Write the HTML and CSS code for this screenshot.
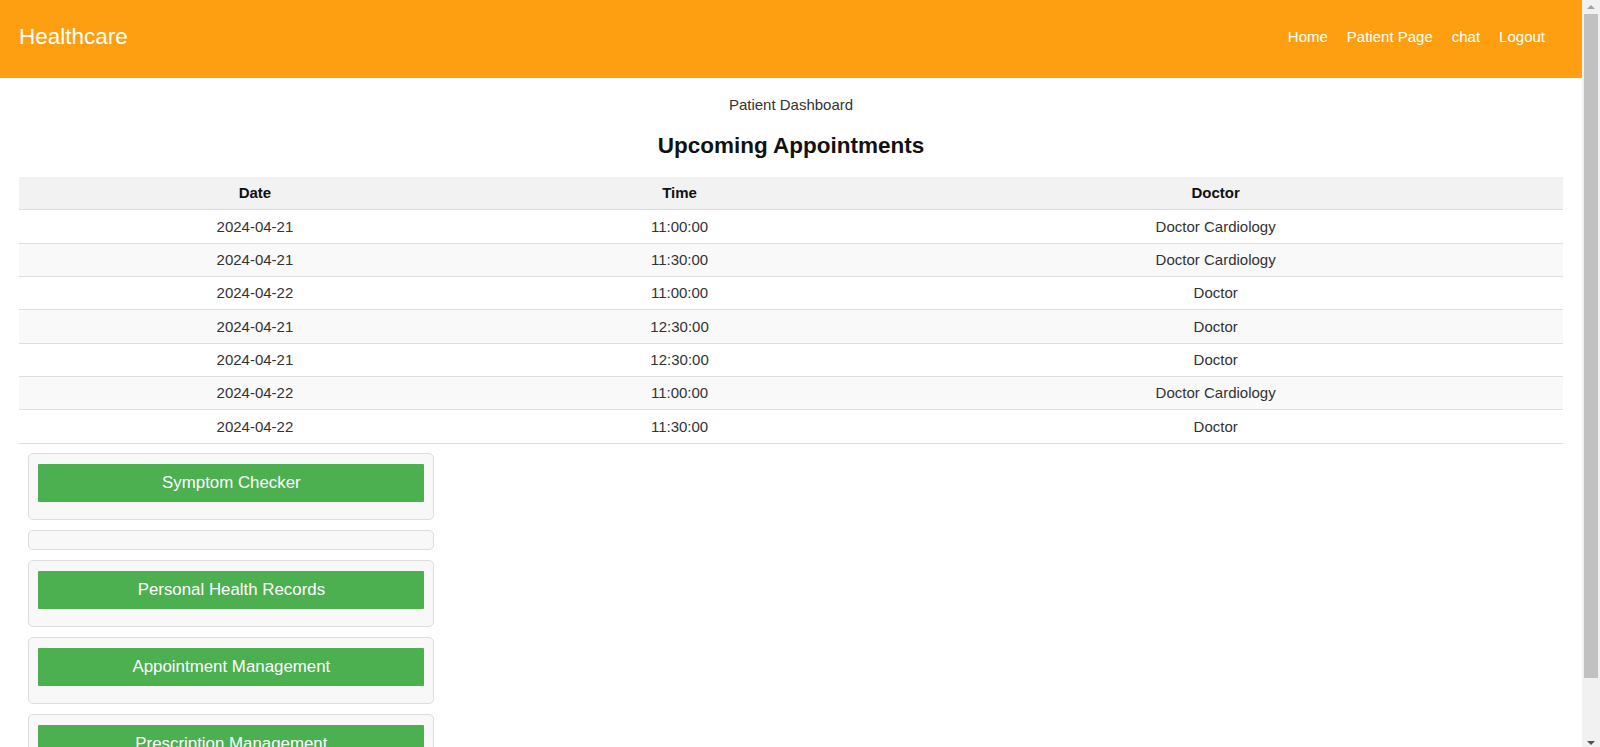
FILE: index.html
```html
<!DOCTYPE html>
<html lang="en">
<head>
<meta charset="utf-8">
<title>Healthcare - Patient Dashboard</title>
<link rel="stylesheet" href="styles.css">
</head>
<body>
<div class="viewport">
  <div class="page">
    <header class="topbar">
      <div class="brand">Healthcare</div>
      <nav class="nav">
        <a href="#" class="nav-link">Home</a>
        <a href="#" class="nav-link">Patient Page</a>
        <a href="#" class="nav-link">chat</a>
        <a href="#" class="nav-link">Logout</a>
      </nav>
    </header>
    <main class="content">
      <p class="subtitle">Patient Dashboard</p>
      <h2 class="section-title">Upcoming Appointments</h2>
      <table class="appt-table">
        <thead>
          <tr><th>Date</th><th>Time</th><th>Doctor</th></tr>
        </thead>
        <tbody>
          <tr><td>2024-04-21</td><td>11:00:00</td><td>Doctor Cardiology</td></tr>
          <tr><td>2024-04-21</td><td>11:30:00</td><td>Doctor Cardiology</td></tr>
          <tr><td>2024-04-22</td><td>11:00:00</td><td>Doctor</td></tr>
          <tr><td>2024-04-21</td><td>12:30:00</td><td>Doctor</td></tr>
          <tr><td>2024-04-21</td><td>12:30:00</td><td>Doctor</td></tr>
          <tr><td>2024-04-22</td><td>11:00:00</td><td>Doctor Cardiology</td></tr>
          <tr><td>2024-04-22</td><td>11:30:00</td><td>Doctor</td></tr>
        </tbody>
      </table>
      <div class="features">
        <div class="card"><button class="btn">Symptom Checker</button></div>
        <div class="card card-empty"></div>
        <div class="card"><button class="btn">Personal Health Records</button></div>
        <div class="card"><button class="btn">Appointment Management</button></div>
        <div class="card"><button class="btn">Prescription Management</button></div>
        <div class="card card-empty"></div>
      </div>
    </main>
  </div>
  <div class="scrollbar" aria-hidden="true">
    <div class="sb-button"><span class="sb-arrow-up"></span></div>
    <div class="sb-track"><div class="sb-thumb"></div></div>
    <div class="sb-button"><span class="sb-arrow-down"></span></div>
  </div>
</div>
</body>
</html>
```
FILE: styles.css
```css
html, body {
  margin: 0;
  padding: 0;
  height: 100%;
  overflow: hidden;
}

body {
  font-family: "Liberation Sans", Arial, sans-serif;
  font-size: 15px;
  color: #333;
  background: #fff;
}

.viewport {
  display: flex;
  height: 100vh;
}

.page {
  flex: 1;
  min-width: 0;
  overflow: hidden;
}

/* window scrollbar */
.scrollbar {
  width: 18px;
  flex: none;
  display: flex;
  flex-direction: column;
  background: #f1f1f1;
}

.sb-button {
  height: 14px;
  flex: none;
  display: flex;
  align-items: center;
  justify-content: center;
}

.sb-arrow-up {
  width: 0;
  height: 0;
  border-left: 4px solid transparent;
  border-right: 4px solid transparent;
  border-bottom: 4px solid #a3a3a3;
}

.sb-arrow-down {
  width: 0;
  height: 0;
  margin-top: 6px;
  border-left: 4px solid transparent;
  border-right: 4px solid transparent;
  border-top: 4px solid #505050;
}

.sb-track {
  flex: 1;
  padding: 0 2px;
}

.sb-thumb {
  height: 664px;
  background: #c1c1c1;
}

/* header */
.topbar {
  box-sizing: border-box;
  height: 78px;
  padding: 0 37px 4px 19px;
  background: #fd9f11;
  display: flex;
  align-items: center;
  justify-content: space-between;
}

.brand {
  color: #fff;
  font-size: 22.5px;
}

.nav {
  display: flex;
  gap: 19px;
  margin-bottom: 2px;
}

.nav-link {
  color: #fff;
  text-decoration: none;
  font-size: 15px;
}

/* main */
.content {
  padding: 0 19px;
}

.subtitle {
  margin: 18px 0 0;
  text-align: center;
  color: #333;
}

.section-title {
  margin: 19.6px 0 18.4px;
  text-align: center;
  font-size: 22.5px;
  color: #111;
}

.appt-table {
  width: 100%;
  border-collapse: collapse;
}

.appt-table th,
.appt-table td {
  padding: 7.5px;
  text-align: center;
  border-bottom: 1px solid #ddd;
  font-size: 15px;
  line-height: 17.33px;
}

.appt-table th {
  background: #f2f2f2;
  color: #111;
  font-weight: bold;
}

.appt-table td {
  color: #333;
}

.appt-table tbody tr:nth-child(even) {
  background: #f9f9f9;
}

.features {
  padding: 9.5px 0 0 9.4px;
}

.card {
  box-sizing: border-box;
  width: 406px;
  padding: 9.4px 9px;
  margin-bottom: 10px;
  background: #f8f8f8;
  border: 1px solid #ddd;
  border-radius: 5px;
}

.card-empty {
  padding: 9px;
}

.btn {
  display: block;
  width: 100%;
  margin: 0 0 7.5px;
  padding: 9.4px;
  border: none;
  border-radius: 1px;
  background: #4caf50;
  color: #fff;
  font-family: "Liberation Sans", Arial, sans-serif;
  font-size: 16.875px;
  line-height: normal;
  cursor: pointer;
}
```
